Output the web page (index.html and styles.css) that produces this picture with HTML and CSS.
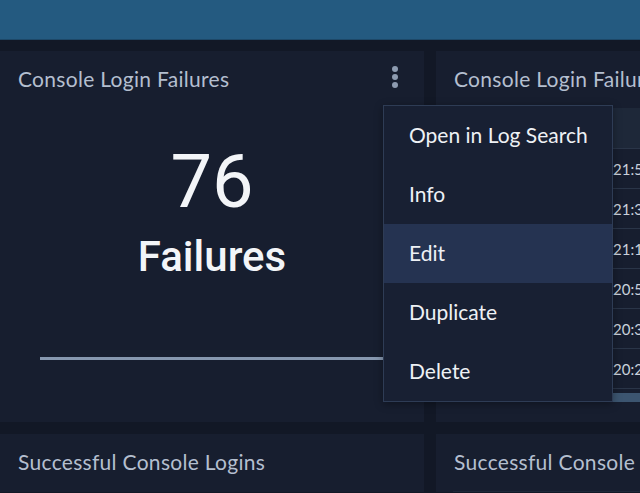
FILE: index.html
```html
<!DOCTYPE html>
<html>
<head>
<meta charset="utf-8">
<link rel="stylesheet" href="styles.css">
</head>
<body>
<div class="topbar"></div>
<div class="grid">
  <section class="panel">
    <header class="panel-head">
      <h2 class="panel-title">Console Login Failures</h2>
      <span class="kebab"><i></i><i></i><i></i></span>
    </header>
    <div class="stat">
      <div class="stat-value">76</div>
      <div class="stat-label">Failures</div>
      <div class="stat-line"></div>
    </div>
  </section>
  <section class="panel">
    <header class="panel-head">
      <h2 class="panel-title">Console Login Failures by User</h2>
    </header>
    <div class="table">
      <div class="thead"></div>
      <div class="row"><span class="date">2023-10-12</span><span class="time">21:52:08</span></div>
      <div class="row"><span class="date">2023-10-12</span><span class="time">21:33:41</span></div>
      <div class="row"><span class="date">2023-10-12</span><span class="time">21:14:19</span></div>
      <div class="row"><span class="date">2023-10-12</span><span class="time">20:55:02</span></div>
      <div class="row"><span class="date">2023-10-12</span><span class="time">20:36:47</span></div>
      <div class="row"><span class="date">2023-10-12</span><span class="time">20:21:30</span></div>
      <div class="scrollbar"></div>
    </div>
  </section>
  <section class="panel">
    <header class="panel-head">
      <h2 class="panel-title">Successful Console Logins</h2>
    </header>
  </section>
  <section class="panel">
    <header class="panel-head">
      <h2 class="panel-title">Successful Console Logins by User</h2>
    </header>
    <div class="table"><div class="thead"></div></div>
  </section>
</div>
<ul class="menu">
  <li class="menu-item">Open in Log Search</li>
  <li class="menu-item">Info</li>
  <li class="menu-item active">Edit</li>
  <li class="menu-item">Duplicate</li>
  <li class="menu-item">Delete</li>
</ul>
</body>
</html>
```
FILE: styles.css
```css
* { box-sizing: border-box; }
html, body { margin: 0; padding: 0; }
body {
  width: 640px;
  height: 493px;
  overflow: hidden;
  background: #121826;
  font-family: Lato, "Liberation Sans", sans-serif;
  position: relative;
}
.topbar {
  height: 40px;
  background: #245a80;
  border-bottom: 1px solid #1d4868;
}
.grid {
  display: grid;
  grid-template-columns: 424px 204px;
  grid-template-rows: 371px 58px;
  column-gap: 12px;
  row-gap: 12px;
  padding-top: 11px;
}
.panel {
  background: #171e2f;
  overflow: hidden;
}
.panel-head {
  height: 54px;
  display: flex;
  align-items: center;
  justify-content: space-between;
  padding: 0 18px;
}
.panel-title {
  margin: 0;
  font-size: 21px;
  letter-spacing: 0.3px;
  font-weight: 400;
  color: #b4bfcf;
  white-space: nowrap;
}
.kebab {
  display: flex;
  flex-direction: column;
  gap: 2px;
  margin-right: 8px;
  margin-top: -3px;
}
.kebab i {
  display: block;
  width: 6px;
  height: 6px;
  border-radius: 50%;
  background: #8d9bb0;
}
.stat {
  display: flex;
  flex-direction: column;
  align-items: center;
  font-family: Roboto, "Liberation Sans", sans-serif;
  color: #f3f5f8;
}
.stat-value {
  font-size: 74px;
  line-height: 1;
  margin-top: 40px;
}
.stat-label {
  font-size: 42px;
  font-weight: 500;
  line-height: 1;
  margin-top: 17px;
}
.stat-line {
  align-self: stretch;
  height: 3px;
  background: #8798b0;
  margin: 79px 40px 0;
}
.table {
  margin: 3px 0 0 17px;
  width: 400px;
}
.thead {
  height: 41px;
  background: #1e2839;
  border-bottom: 1px solid #2a3548;
}
.row {
  height: 40px;
  display: flex;
  align-items: center;
  border-bottom: 1px solid #2a3548;
  font-size: 15px;
  color: #c9d1dc;
  white-space: nowrap;
}
.date { flex: 0 0 160px; padding-left: 12px; }
.scrollbar {
  height: 9px;
  margin-top: 4px;
  background: #3c5570;
}
.menu {
  position: absolute;
  left: 383px;
  top: 105px;
  width: 230px;
  margin: 0;
  padding: 0;
  list-style: none;
  background: #182033;
  border: 1px solid #2e3c55;
  box-shadow: 0 2px 8px rgba(0,0,0,0.35);
}
.menu-item {
  height: 59px;
  display: flex;
  align-items: center;
  padding: 0 0 3px 25px;
  font-size: 21px;
  color: #eef1f5;
}
.menu-item.active { background: #253351; }
```
